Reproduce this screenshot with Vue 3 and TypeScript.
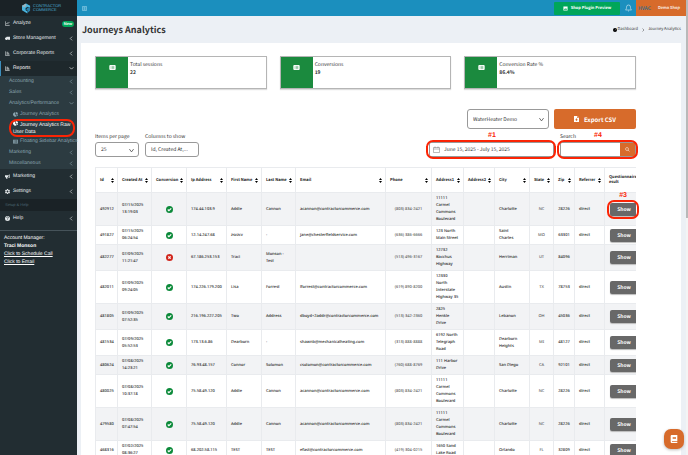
<script setup lang="ts">
import { ref } from 'vue'

interface Row {
  id: string
  created: string
  ok: boolean
  ip: string
  first: string
  last: string
  email: string
  phone: string
  address: string
  city: string
  state: string
  zip: string
  referrer: string
}

const columns: { key: string; label: string }[] = [
  { key: 'id', label: 'Id' },
  { key: 'created', label: 'Created At' },
  { key: 'conversion', label: 'Conversion' },
  { key: 'ip', label: 'Ip Address' },
  { key: 'first', label: 'First Name' },
  { key: 'last', label: 'Last Name' },
  { key: 'email', label: 'Email' },
  { key: 'phone', label: 'Phone' },
  { key: 'address1', label: 'Address1' },
  { key: 'address2', label: 'Address2' },
  { key: 'city', label: 'City' },
  { key: 'state', label: 'State' },
  { key: 'zip', label: 'Zip' },
  { key: 'referrer', label: 'Referrer' },
]

const rows: Row[] = [
  { id: '492912', created: '07/15/2025 13:19:03', ok: true, ip: '174.44.103.9', first: 'Addie', last: 'Cannon', email: 'acannon@contractorcommerce.com', phone: '(803) 834-2421', address: '11111 Carmel Commons Boulevard', city: 'Charlotte', state: 'NC', zip: '28226', referrer: 'direct' },
  { id: '491827', created: '07/15/2025 06:24:54', ok: true, ip: '12.14.247.68', first: 'zsvzcv', last: '-', email: 'jane@chesterfieldservice.com', phone: '(636) 386-6666', address: '123 North Main Street', city: 'Saint Charles', state: 'MO', zip: '63301', referrer: 'direct' },
  { id: '482277', created: '07/09/2025 11:21:47', ok: false, ip: '67.186.253.153', first: 'Traci', last: 'Monson - Test', email: '', phone: '(513) 496-3167', address: '12732 Bacchus Highway', city: 'Herriman', state: 'UT', zip: '84096', referrer: '' },
  { id: '482011', created: '07/09/2025 09:24:05', ok: true, ip: '174.226.179.200', first: 'Lisa', last: 'Forrest', email: 'lforrest@contractorcommerce.com', phone: '(619) 890-8200', address: '12330 North Interstate Highway 35', city: 'Austin', state: 'TX', zip: '78753', referrer: 'direct' },
  { id: '481805', created: '07/09/2025 07:52:35', ok: true, ip: '216.196.227.205', first: 'Two', last: 'Address', email: 'dboyd+2addr@contractorcommerce.com', phone: '(513) 342-2360', address: '2825 Henkle Drive', city: 'Lebanon', state: 'OH', zip: '45036', referrer: 'direct' },
  { id: '481534', created: '07/09/2025 05:52:53', ok: true, ip: '173.13.6.86', first: 'Dearborn', last: '-', email: 'shawnb@mechanicalheating.com', phone: '(313) 888-8888', address: '6192 North Telegraph Road', city: 'Dearborn Heights', state: 'MI', zip: '48127', referrer: 'direct' },
  { id: '480624', created: '07/08/2025 14:23:21', ok: true, ip: '76.93.48.157', first: 'Connor', last: 'Solomon', email: 'csolomon@contractorcommerce.com', phone: '(760) 688-8769', address: '111 Harbor Drive', city: 'San Diego', state: 'CA', zip: '92101', referrer: 'direct' },
  { id: '480025', created: '07/08/2025 10:37:18', ok: true, ip: '75.58.49.120', first: 'Addie', last: 'Cannon', email: 'acannon@contractorcommerce.com', phone: '(803) 834-2421', address: '11111 Carmel Commons Boulevard', city: 'Charlotte', state: 'NC', zip: '28226', referrer: 'direct' },
  { id: '479580', created: '07/08/2025 07:47:54', ok: true, ip: '75.58.49.120', first: 'Addie', last: 'Cannon', email: 'acannon@contractorcommerce.com', phone: '(803) 834-2421', address: '11111 Carmel Commons Boulevard', city: 'Charlotte', state: 'NC', zip: '28226', referrer: 'direct' },
  { id: '468316', created: '07/02/2025 08:36:27', ok: true, ip: '68.202.58.115', first: 'TEST', last: 'TEST', email: 'efast@contractorcommerce.com', phone: '(419) 304-0215', address: '1650 Sand Lake Road', city: 'Orlando', state: 'FL', zip: '32809', referrer: 'direct' },
]

const stats: { label: string; value: string }[] = [
  { label: 'Total sessions', value: '22' },
  { label: 'Conversions', value: '19' },
  { label: 'Conversion Rate %', value: '86.4%' },
]

const perPage = ref('25')
const shop = ref('WaterHeater Demo')
const shownColumns = ref('Id, Created At,...')
const dateRange = ref('June 15, 2025 - July 15, 2025')
const search = ref('')
</script>

<template>
  <div class="app">
    <aside class="sidebar">
      <a class="logo" href="#">
        <svg class="logo-mark" viewBox="0 0 20 22">
          <path d="M9 0 18 5v5l-5-3-5 3v5l4 2v5L0 15V5z" fill="#49b4de" />
          <path d="M18 8v8l-6 5v-6l-3-2 4-4z" fill="#2a7fa8" />
          <path d="M9 0v6L4 9 0 5z" fill="#9cb3bd" />
        </svg>
        <span>CONTRACTOR<br />COMMERCE</span>
      </a>
      <nav class="menu">
        <a class="item" href="#">
          <svg viewBox="0 0 16 16" class="ico line"><path d="M1 1v13h14M4 10l3-4 3 2 4-5" /></svg>
          Analyze<b class="badge">New</b>
        </a>
        <a class="item" href="#">
          <svg viewBox="0 0 16 16" class="ico"><path d="M5 2h11v9h-1a2 2 0 0 1-4 0H7a2 2 0 0 1-4 0H0V7l3-3h2z" /></svg>
          Store Management<svg class="chev" viewBox="0 0 8 8"><path d="M5 1 2 4l3 3" /></svg>
        </a>
        <a class="item" href="#">
          <svg viewBox="0 0 16 16" class="ico line"><path d="M1 1v13h14M5 4h5M5 7h8M5 10h9" /></svg>
          Corporate Reports<svg class="chev" viewBox="0 0 8 8"><path d="M5 1 2 4l3 3" /></svg>
        </a>
        <a class="item active" href="#">
          <svg viewBox="0 0 16 16" class="ico line"><path d="M1 1v13h14M5 4h5M5 7h8M5 10h9" /></svg>
          Reports<svg class="chev" viewBox="0 0 8 8"><path d="M1 2l3 3 3-3" /></svg>
        </a>
        <div class="submenu">
          <a href="#">Accounting<svg class="chev" viewBox="0 0 8 8"><path d="M5 1 2 4l3 3" /></svg></a>
          <a href="#">Sales<svg class="chev" viewBox="0 0 8 8"><path d="M5 1 2 4l3 3" /></svg></a>
          <a href="#">Analytics/Performance<svg class="chev" viewBox="0 0 8 8"><path d="M1 2l3 3 3-3" /></svg></a>
          <a class="leaf" href="#">
            <svg viewBox="0 0 16 16" class="ico"><path d="M7 1a7 7 0 1 0 5 12L7 8zM9 0v7h7A7 7 0 0 0 9 0zM10 9l4 4a7 7 0 0 0 2-4z" /></svg>
            <span>Journey Analytics</span>
          </a>
          <a class="leaf current" href="#">
            <span><svg viewBox="0 0 16 16" class="ico"><path d="M7 1a7 7 0 1 0 5 12L7 8zM9 0v7h7A7 7 0 0 0 9 0zM10 9l4 4a7 7 0 0 0 2-4z" /></svg>Journey Analytics Raw User Data</span>
            <i class="ring"></i>
          </a>
          <a class="leaf" href="#">
            <svg viewBox="0 0 16 16" class="ico"><path fill-rule="evenodd" d="M0 2h16v12H0zM2 5v2h3V5zm5 0v2h7V5zM2 9v2h3V9zm5 0v2h7V9z" /></svg>
            <span>Floating Sidebar Analytics</span>
          </a>
          <a href="#">Marketing<svg class="chev" viewBox="0 0 8 8"><path d="M5 1 2 4l3 3" /></svg></a>
          <a href="#">Miscellaneous<svg class="chev" viewBox="0 0 8 8"><path d="M5 1 2 4l3 3" /></svg></a>
        </div>
        <a class="item" href="#">
          <svg viewBox="0 0 16 16" class="ico"><path fill-rule="evenodd" d="M15 1v12l-5-3H7l1 5H4l-1-5H0V4h10zM13 4l-3 2v2l3 2z" /></svg>
          Marketing<svg class="chev" viewBox="0 0 8 8"><path d="M5 1 2 4l3 3" /></svg>
        </a>
        <a class="item" href="#">
          <svg viewBox="0 0 16 16" class="ico"><path fill-rule="evenodd" d="M6 0h4v2l2 1 2-1 2 4-2 1v2l2 1-2 4-2-1-2 1v2H6v-2l-2-1-2 1-2-4 2-1V7L0 6l2-4 2 1 2-1zm2 5a3 3 0 1 0 0 6 3 3 0 0 0 0-6z" /></svg>
          Settings<svg class="chev" viewBox="0 0 8 8"><path d="M5 1 2 4l3 3" /></svg>
        </a>
        <p class="section">Setup &amp; Help</p>
        <a class="item help" href="#">
          <svg viewBox="0 0 16 16" class="ico"><circle cx="8" cy="8" r="8" /><path d="M5 6c0-4 6-4 6-1 0 2-3 2-3 4M8 11v2" fill="none" stroke="#222d32" stroke-width="2" /></svg>
          Help<svg class="chev" viewBox="0 0 8 8"><path d="M5 1 2 4l3 3" /></svg>
        </a>
      </nav>
      <div class="manager">
        <span>Account Manager:</span>
        <b>Traci Monson</b>
        <a href="#">Click to Schedule Call</a>
        <a href="#">Click to Email</a>
      </div>
    </aside>

    <div class="main">
      <header class="topbar">
        <button class="burger" type="button" aria-label="Toggle menu">
          <svg viewBox="0 0 10 10"><path d="M1 1h8v8H1zM3 3h4M3 5h4M3 7h4" /></svg>
        </button>
        <a class="preview" href="#">
          <svg viewBox="0 0 12 12"><path fill-rule="evenodd" d="M1 1h10v10H1zM2 9h8L7 5 5 8 4 6z" /></svg>
          Shop Plugin Preview
        </a>
        <button class="bell" type="button" aria-label="Notifications">
          <svg viewBox="0 0 14 16"><path d="M1 12c2-2 2-4 2-6a4 4 0 0 1 8 0c0 2 0 4 2 6zM6 14h2" /></svg>
        </button>
        <a class="shop" href="#">
          <span class="shop-logo">HVAC</span>
          <span>Demo Shop</span>
        </a>
      </header>

      <div class="heading">
        <h1>Journeys Analytics</h1>
        <nav class="crumbs">
          <svg viewBox="0 0 10 10"><circle cx="5" cy="5" r="5" /><path d="M5 6 7 3" stroke="#fff" /></svg>
          <a href="#">Dashboard</a>
          <svg class="sep" viewBox="0 0 8 8"><path d="M3 1l3 3-3 3" /></svg>
          <span>Journey Analytics</span>
        </nav>
      </div>

      <main class="card">
        <section class="stats">
          <article v-for="s in stats" :key="s.label" class="stat">
            <div class="stat-icon">
              <svg viewBox="0 0 14 11">
                <rect width="14" height="11" rx="2" fill="#fff" />
                <path d="M3 3h1M5 3h6M3 5.500h1M5 5.500h6M3 8h1M5 8h6" stroke="#1b8a3e" />
              </svg>
            </div>
            <div class="stat-text">
              <span>{{ s.label }}</span>
              <b>{{ s.value }}</b>
            </div>
          </article>
        </section>

        <section class="actions">
          <div class="select shop-select">
            <select v-model="shop" aria-label="Shop">
              <option>WaterHeater Demo</option>
            </select>
            <svg class="caret" viewBox="0 0 10 10"><path d="M2 3l3 4 3-4" /></svg>
          </div>
          <button class="export" type="button">
            <svg viewBox="0 0 10 12"><path fill-rule="evenodd" d="M0 0h6v4h4v8H0zM7 0l3 3H7zM4 5v2H2l3 3 3-3H6V5z" /></svg>
            Export CSV
          </button>
        </section>

        <section class="filters">
          <div class="field per-page">
            <label for="per-page">Items per page</label>
            <div class="select">
              <select id="per-page" v-model="perPage">
                <option>25</option>
              </select>
              <svg class="caret" viewBox="0 0 10 10"><path d="M2 3l3 4 3-4" /></svg>
            </div>
          </div>
          <div class="field cols">
            <label for="cols">Columns to show</label>
            <input id="cols" v-model="shownColumns" class="box" type="text" />
          </div>
          <div class="field date">
            <div class="date-box">
              <svg viewBox="0 0 14 14"><path d="M1 3h12v10H1zM1 6h12M4 1v3M10 1v3" /></svg>
              <input v-model="dateRange" type="text" aria-label="Date range" />
            </div>
            <i class="ring"></i>
            <b class="note">#1</b>
          </div>
          <div class="field search">
            <label for="search">Search</label>
            <div class="search-box">
              <input id="search" v-model="search" type="text" />
              <button type="button" aria-label="Search">
                <svg viewBox="0 0 10 10"><circle cx="4" cy="4" r="3" /><path d="M6 6l3 3" /></svg>
              </button>
            </div>
            <i class="ring"></i>
            <b class="note">#4</b>
          </div>
        </section>

        <div class="table-area">
          <div class="table-wrap">
            <table>
              <colgroup>
                <col v-for="c in columns" :key="c.key" :class="'c-' + c.key" />
                <col class="c-result" />
              </colgroup>
              <thead>
                <tr>
                  <th v-for="c in columns" :key="c.key">
                    <div class="th">
                      {{ c.label }}
                      <svg viewBox="0 0 6 10"><path d="M3 0l3 4H0zM3 10l3-4H0z" /></svg>
                    </div>
                  </th>
                  <th class="result">Questionnaire R<br />esult</th>
                </tr>
              </thead>
              <tbody>
                <tr v-for="r in rows" :key="r.id">
                  <td>{{ r.id }}</td>
                  <td>{{ r.created }}</td>
                  <td class="mid">
                    <svg class="status" viewBox="0 0 12 12">
                      <circle cx="6" cy="6" r="6" :fill="r.ok ? '#0c8a3a' : '#d1261c'" />
                      <path :d="r.ok ? 'M3 6l2 2 4-4' : 'M4 4l4 4M8 4l-4 4'" />
                    </svg>
                  </td>
                  <td class="tight">{{ r.ip }}</td>
                  <td>{{ r.first }}</td>
                  <td class="last">{{ r.last }}</td>
                  <td class="tight">{{ r.email }}</td>
                  <td class="mid light">{{ r.phone }}</td>
                  <td class="address">{{ r.address }}</td>
                  <td></td>
                  <td class="city">{{ r.city }}</td>
                  <td class="mid light">{{ r.state }}</td>
                  <td class="mid">{{ r.zip }}</td>
                  <td>{{ r.referrer }}</td>
                  <td class="show-cell">
                    <button class="show" type="button">Show</button>
                  </td>
                </tr>
              </tbody>
            </table>
          </div>
          <i class="ring"></i>
          <b class="note">#3</b>
        </div>
      </main>
    </div>
    <div class="scroll"><i></i></div>

    <button class="chat" type="button" aria-label="Help center">
      <svg viewBox="0 0 12 12"><path fill-rule="evenodd" d="M2 0h9v9H3v1h8v2H2L1 11V1zM4 3v1h5V3zm0 2v1h5V5z" /></svg>
    </button>
  </div>
</template>

<style>
body {
  margin: 0;
  overflow: hidden;
}
</style>

<style scoped>
.app,
.app * {
  box-sizing: border-box;
}
.app {
  display: flex;
  height: 100vh;
  overflow: hidden;
  background: #ecf0f5;
  color: #333;
  font: 5px/7px 'Noto Sans CJK SC', 'Noto Sans', sans-serif;
  text-rendering: geometricPrecision;
}
.app button,
.app input,
.app select {
  margin: 0;
  border: 0;
  padding: 0;
  background: none;
  color: inherit;
  font: inherit;
  text-rendering: inherit;
  outline: 0;
  appearance: none;
}
a {
  color: inherit;
  text-decoration: none;
}
svg {
  display: block;
  flex: none;
}

/* Sidebar */
.sidebar {
  flex: none;
  width: 77px;
  background: #222d32;
  color: #e3e8ea;
  font: 5px/7px 'Liberation Sans', sans-serif;
}
.logo {
  display: flex;
  align-items: center;
  gap: 2px;
  height: 16px;
  padding-left: 22px;
  background: #1a2226;
  color: #4aa9cf;
  font-size: 4px;
  line-height: 4px;
}
.logo-mark {
  width: 9px;
  height: 11px;
}
.item {
  display: flex;
  align-items: center;
  gap: 3px;
  height: 15px;
  padding: 0 3px 0 5px;
}
.item.active {
  background: #1e282c;
  box-shadow: inset 1px 0 #3c8dbc;
  color: #fff;
}
.ico {
  width: 5px;
  height: 5px;
  fill: currentColor;
}
.ico.line {
  fill: none;
  stroke: currentColor;
  stroke-width: 2;
}
.chev {
  width: 5px;
  height: 5px;
  margin-left: auto;
  fill: none;
  stroke: currentColor;
}
.badge {
  margin-left: auto;
  padding: 0 2px;
  border-radius: 3px;
  background: #00a65a;
  color: #fff;
  font-size: 4px;
  line-height: 6px;
}
.submenu {
  background: #2c3b41;
  color: #8aa4af;
}
.submenu a {
  display: flex;
  align-items: center;
  height: 11px;
  padding: 0 3px 0 9px;
}
.submenu .leaf {
  gap: 2px;
  padding-left: 13px;
  padding-right: 0;
  white-space: nowrap;
}
.submenu .current {
  position: relative;
  height: 16px;
  color: #fff;
  white-space: normal;
}
.current .ico {
  display: inline-block;
  margin-right: 2px;
}
.ring {
  position: absolute;
  border: 2px solid #fb2405;
}
.current .ring {
  inset: -1px 2px -1px 9px;
  border-radius: 8px;
}
.section {
  margin: 0;
  padding-left: 5px;
  background: #1a2226;
  color: #4b646f;
  font-size: 4px;
  line-height: 12px;
}
.manager {
  display: flex;
  flex-direction: column;
  align-items: flex-start;
  margin-top: 4px;
  padding: 3px 4px;
  border-top: 1px solid #46535a;
  color: #fff;
  line-height: 8px;
}
.manager a {
  text-decoration: underline;
}

/* Top bar */
.main {
  display: flex;
  flex: 1;
  flex-direction: column;
  min-width: 0;
}
.topbar {
  display: flex;
  flex: none;
  align-items: center;
  height: 16px;
  padding-left: 5px;
  background: #1b8fbe;
  color: #fff;
  font-size: 4px;
}
.burger svg {
  width: 5px;
  height: 5px;
  fill: none;
  stroke: #b5e0f2;
}
.preview {
  display: flex;
  align-items: center;
  justify-content: center;
  gap: 3px;
  width: 66px;
  height: 13px;
  margin-left: auto;
  border-radius: 1px;
  background: #00a65a;
  font-weight: 700;
}
.preview svg {
  width: 5px;
  height: 5px;
  fill: #fff;
}
.bell {
  display: flex;
  justify-content: center;
  width: 16px;
}
.bell svg {
  width: 7px;
  height: 8px;
  fill: none;
  stroke: #fff;
}
.shop {
  display: flex;
  align-items: center;
  justify-content: space-between;
  width: 50px;
  height: 16px;
  padding: 0 6px 0 2px;
  background: #d76b2b;
  font-weight: 500;
}
.shop-logo {
  color: #1d6d92;
  font-size: 5px;
}

/* Heading */
.heading {
  display: flex;
  flex: none;
  align-items: center;
  justify-content: space-between;
  height: 27px;
  padding: 0 5px;
}
h1 {
  margin: 0;
  font-size: 9px;
  font-weight: 700;
  line-height: 14px;
}
.crumbs {
  display: flex;
  align-items: center;
  gap: 1px;
  font-size: 4px;
}
.crumbs svg {
  width: 4px;
  height: 4px;
}
.crumbs .sep {
  margin: 0 2px;
  fill: none;
  stroke: #444;
}

/* Content card */
.card {
  flex: 1;
  min-height: 0;
  margin: 0 5px 0 4px;
  padding: 13px 45px 0 14px;
  overflow: hidden;
  background: #fff;
}
.stats {
  display: grid;
  grid-template-columns: repeat(3, 1fr);
  gap: 13px;
}
.stat {
  display: flex;
  height: 33px;
  border: 1px solid #b5b5b5;
  box-shadow: 0 1px 1px #ddd;
}
.stat-icon {
  display: flex;
  justify-content: center;
  width: 32px;
  padding-top: 8px;
  background: #1b8a3e;
}
.stat-icon svg {
  width: 7px;
  height: 5px;
}
.stat-text {
  display: flex;
  flex-direction: column;
  padding: 4px 2px;
  line-height: 8px;
}

.actions {
  display: flex;
  justify-content: flex-end;
  gap: 5px;
  margin-top: 20px;
}
.select {
  display: block;
  position: relative;
}
.app .select select,
.app .box {
  display: block;
  width: 100%;
  height: 15px;
  padding: 0 5px;
  border: 1px solid #999;
  border-radius: 3px;
  background: #fff;
}
.caret {
  position: absolute;
  top: 50%;
  right: 4px;
  width: 7px;
  height: 7px;
  margin-top: -3px;
  fill: none;
  stroke: #333;
}
.shop-select {
  width: 82px;
}
.app .shop-select select {
  height: 20px;
}
.app .export {
  display: flex;
  align-items: center;
  justify-content: center;
  gap: 5px;
  width: 82px;
  height: 20px;
  border-radius: 2px;
  background: #d76b2b;
  color: #fff;
  font-size: 6px;
  font-weight: 700;
}
.export svg {
  width: 5px;
  height: 6px;
  fill: #fff;
}

.filters {
  display: flex;
  align-items: flex-end;
  gap: 6px;
  margin-top: 4px;
}
.field {
  position: relative;
}
.field label {
  display: block;
  margin-bottom: 2px;
}
.per-page {
  width: 44px;
}
.cols {
  width: 54px;
}
.date {
  width: 125px;
  margin-left: auto;
}
.date-box {
  display: flex;
  align-items: center;
  gap: 4px;
  height: 15px;
  padding-left: 3px;
  border: 1px solid #999;
  border-radius: 2px;
}
.app .date-box input {
  flex: 1;
  min-width: 0;
}
.date-box svg {
  width: 7px;
  height: 7px;
  fill: none;
  stroke: #777;
}
.search {
  width: 76px;
}
.search-box {
  display: flex;
  height: 15px;
  border: 1px solid #999;
  border-radius: 2px;
}
.app .search-box input {
  flex: 1;
  min-width: 0;
}
.app .search-box button {
  display: flex;
  align-items: center;
  justify-content: center;
  width: 15px;
  background: #d76b2b;
}
.search-box svg {
  width: 5px;
  height: 5px;
  fill: none;
  stroke: #fff;
}
.note {
  position: absolute;
  color: #fb2405;
  font: 700 7px/7px 'Liberation Sans', sans-serif;
}
.date .ring,
.search .ring {
  right: -2px;
  bottom: -2px;
  left: -3px;
  height: 19px;
  border-radius: 7px;
}
.date .note,
.search .note {
  bottom: 18px;
  left: 59px;
}
.search .note {
  left: 34px;
}

/* Table */
.table-area {
  position: relative;
  margin-top: 10px;
}
.table-wrap {
  overflow: hidden;
}
table {
  width: 655px;
  table-layout: fixed;
  border-spacing: 0;
  border-top: 1px solid #e9ebee;
}
.c-id { width: 23px; }
.c-created { width: 34px; }
.c-conversion { width: 35px; }
.c-ip { width: 40px; }
.c-first { width: 35px; }
.c-last { width: 34px; }
.c-email { width: 90px; }
.c-phone { width: 46px; }
.c-address1 { width: 32px; }
.c-address2 { width: 31px; }
.c-city { width: 35px; }
.c-state { width: 24px; }
.c-zip { width: 21px; }
.c-referrer { width: 30px; }
th,
td {
  padding: 2px 3px 2px 4px;
  border-right: 1px solid #e9ebee;
  border-bottom: 1px solid #e9ebee;
  text-align: left;
}
td {
  color: #1c1c1c;
  font: 500 4px/7px 'Noto Sans', sans-serif;
}
th:first-child,
td:first-child {
  border-left: 1px solid #e9ebee;
}
th {
  height: 25px;
  color: #222;
  font-size: 4px;
  font-weight: 700;
  line-height: 5px;
  white-space: nowrap;
}
.th {
  display: flex;
  align-items: center;
  justify-content: space-between;
}
.th svg {
  width: 3px;
  height: 5px;
}
tbody tr:nth-child(odd) {
  background: #f2f3f5;
}
.tight,
.mid {
  white-space: nowrap;
}
.mid {
  padding: 2px 0;
  text-align: center;
}
.address {
  padding-right: 4px;
}
.city,
.last {
  padding-right: 8px;
}
.light {
  color: #555;
}
.status {
  width: 7px;
  height: 7px;
  margin: 0 auto;
}
.status path {
  fill: none;
  stroke: #fff;
  stroke-width: 2;
}
.show-cell {
  padding-left: 5px;
}
.app .show {
  display: block;
  width: 28px;
  height: 13px;
  border-radius: 2px;
  background: #686868;
  box-shadow: 0 1px 1px #bbb;
  color: #fff;
  font: 700 5px/7px 'Noto Sans CJK SC', sans-serif;
}
.table-area .ring {
  top: 33px;
  right: -3px;
  width: 32px;
  height: 19px;
  border-radius: 7px;
}
.table-area .note {
  top: 25px;
  right: 9px;
}

.scroll {
  flex: none;
  width: 2px;
  background: #f4f4f4;
}
.scroll i {
  display: block;
  height: 48%;
  background: #b9b9b9;
}
.app .chat {
  display: flex;
  position: absolute;
  right: 4px;
  bottom: 6px;
  align-items: center;
  justify-content: center;
  width: 20px;
  height: 20px;
  border-radius: 7px;
  background: #d76b2b;
  box-shadow: 0 1px 3px #bbb;
}
.chat svg {
  width: 8px;
  height: 8px;
  fill: #fff;
}
</style>
